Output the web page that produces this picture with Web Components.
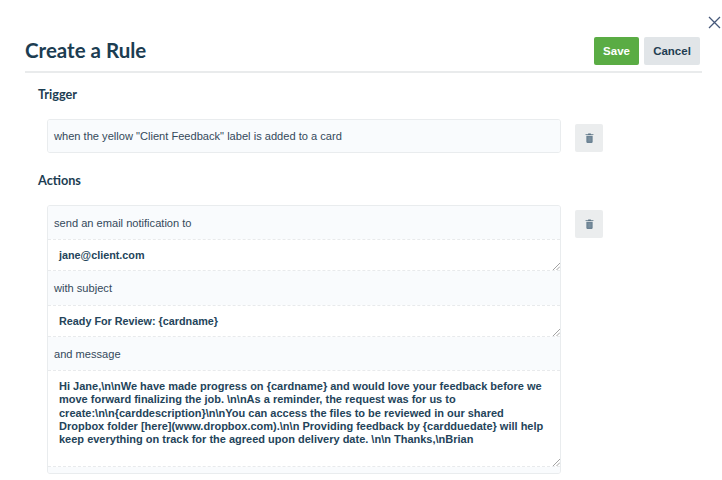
<!DOCTYPE html>
<html>
<head>
<meta charset="utf-8">
<title>Create a Rule</title>
<style>
  html, body { margin: 0; padding: 0; background: #fff; }
  body { width: 722px; height: 480px; overflow: hidden; font-family: "Liberation Sans", Arial, sans-serif; color: #1f3a4f; }
</style>
</head>
<body>
<rule-editor>
  <rule-section title="Trigger" pad="12">
    <rule-row>
      <action-box>
        <box-label>when the yellow "Client Feedback" label is added to a card</box-label>
      </action-box>
    </rule-row>
  </rule-section>
  <rule-section title="Actions" pad="18">
    <rule-row>
      <action-box>
        <box-label h="33">send an email notification to</box-label>
        <box-input h="32">jane@client.com</box-input>
        <box-label h="34">with subject</box-label>
        <box-input h="32">Ready For Review: {cardname}</box-input>
        <box-label h="33">and message</box-label>
        <box-input h="97" block>Hi Jane,\n\nWe have made progress on {cardname} and would love your feedback before we move forward finalizing the job. \n\nAs a reminder, the request was for us to create:\n\n{carddescription}\n\nYou can access the files to be reviewed in our shared Dropbox folder [here](www.dropbox.com).\n\n Providing feedback by {cardduedate} will help keep everything on track for the agreed upon delivery date. \n\n Thanks,\nBrian</box-input>
        <box-label h="6"></box-label>
      </action-box>
    </rule-row>
  </rule-section>
</rule-editor>
<script>
  class RuleEditor extends HTMLElement {
    constructor() {
      super();
      this.shadow = this.attachShadow({ mode: "open" });
      this.shadow.innerHTML = `
      <style>
        :host { display: block; position: relative; padding: 37px 20px 0 25px; width: 677px; }
        .head {
          display: flex;
          justify-content: space-between;
          align-items: center;
          height: 28px;
          padding: 0 2px 6px 0;
          border-bottom: 2px solid #e9ebec;
        }
        h1 {
          margin: 0 0 2px;
          font: 700 20.5px/26px Lato, sans-serif;
          color: #1c3d52;
        }
        .btns { display: flex; gap: 5px; }
        button {
          height: 28px;
          border: 0;
          border-radius: 2px;
          font: 700 11.5px "Liberation Sans", Arial, sans-serif;
          padding: 0;
        }
        .save { width: 45px; background: #5aac44; color: #fff; }
        .cancel { width: 56px; background: #e1e5e8; color: #1f3d52; }
        .close { position: absolute; top: 16px; left: 708px; width: 13px; height: 13px; }
      </style>
      <svg class="close" viewBox="0 0 13 13"><path d="M1 1l11 11M12 1L1 12" stroke="#46587a" stroke-width="1.3" fill="none"/></svg>
      <div class="head">
        <h1>Create a Rule</h1>
        <div class="btns">
          <button class="save">Save</button>
          <button class="cancel">Cancel</button>
        </div>
      </div>
      <slot></slot>
    `;
    }
  }

  class RuleSection extends HTMLElement {
    constructor() {
      super();
      this.shadow = this.attachShadow({ mode: "open" });
      const title = this.getAttribute("title");
      const pad = Number(this.getAttribute("pad") || 12);
      this.shadow.innerHTML = `
      <style>
        :host { display: block; padding-left: 13px; }
        h2 {
          margin: 0;
          height: ${pad + 34}px;
          padding-top: ${pad}px;
          box-sizing: border-box;
          font: 700 12.7px/18px Lato, sans-serif;
          color: #1c3d52;
        }
        .body { padding-left: 9px; }
      </style>
      <h2>${title}</h2>
      <div class="body"><slot></slot></div>
    `;
    }
  }

  class RuleRow extends HTMLElement {
    constructor() {
      super();
      this.shadow = this.attachShadow({ mode: "open" });
      this.shadow.innerHTML = `
      <style>
        :host { display: flex; align-items: flex-start; gap: 14px; }
        .trash {
          flex: none;
          margin-top: 5px;
          width: 28px;
          height: 28px;
          border-radius: 2px;
          background: #ebedee;
          display: flex;
          align-items: center;
          justify-content: center;
        }
      </style>
      <slot></slot>
      <div class="trash">
        <svg width="9" height="10" viewBox="0 0 10 11">
          <path d="M3.5 1.2V.4h3v.8H9.4v1H.6v-1z" fill="#5c7485"/>
          <path d="M1.5 3h7v7c0 .5-.4 1-1 1h-5c-.6 0-1-.5-1-1z" fill="#6b8293"/>
          <path d="M3.6 4.5v5M5 4.5v5M6.4 4.5v5" stroke="#8fa1ae" stroke-width=".5"/>
        </svg>
      </div>
    `;
    }
  }

  class ActionBox extends HTMLElement {
    constructor() {
      super();
      this.shadow = this.attachShadow({ mode: "open" });
      this.shadow.innerHTML = `
      <style>
        :host {
          display: block;
          width: 514px;
          box-sizing: border-box;
          border: 1px solid #e9ecee;
          border-radius: 3px;
          overflow: hidden;
          background: #f9fbfd;
        }
      </style>
      <slot></slot>
    `;
    }
  }

  class BoxLabel extends HTMLElement {
    constructor() {
      super();
      this.shadow = this.attachShadow({ mode: "open" });
      const h = this.getAttribute("h") || "32";
      this.shadow.innerHTML = `
      <style>
        :host {
          display: flex;
          align-items: center;
          box-sizing: border-box;
          height: ${h}px;
          padding-left: 6px;
          font-size: 11.1px;
          color: #34495b;
          background: #f9fbfd;
        }
      </style>
      <slot></slot>
    `;
    }
  }

  class BoxInput extends HTMLElement {
    constructor() {
      super();
      this.shadow = this.attachShadow({ mode: "open" });
      const h = Number(this.getAttribute("h") || 32);
      const isBlock = this.hasAttribute("block");
      this.shadow.innerHTML = `
      <style>
        :host {
          display: block;
          position: relative;
          box-sizing: border-box;
          height: ${h}px;
          padding: ${isBlock ? "9px 12px 0 11px" : "0 12px 0 11px"};
          line-height: ${isBlock ? "13.3px" : h - 2 + "px"};
          font-size: ${isBlock ? "11px" : "10.8px"};
          font-weight: 700;
          color: #24445a;
          background: #fff;
          border-top: 1px dashed #e8eaec;
          border-bottom: 1px dashed #e8eaec;
        }
        svg { position: absolute; right: 0; bottom: 0; }
      </style>
      <slot></slot>
      <svg width="7" height="7" viewBox="0 0 7 7"><path d="M0 7l7-7M3.5 7L7 3.5" stroke="#8b8b8b" stroke-width=".8"/></svg>
    `;
    }
  }

  customElements.define("rule-editor", RuleEditor);
  customElements.define("rule-section", RuleSection);
  customElements.define("rule-row", RuleRow);
  customElements.define("action-box", ActionBox);
  customElements.define("box-label", BoxLabel);
  customElements.define("box-input", BoxInput);
</script>
</body>
</html>
